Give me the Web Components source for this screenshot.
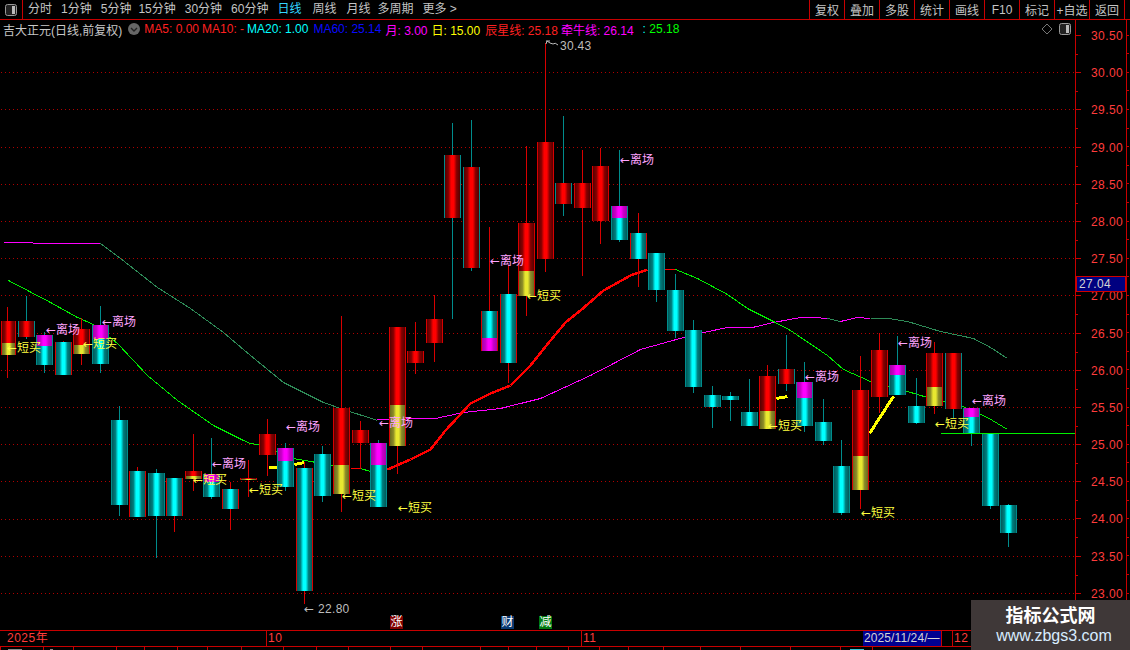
<!DOCTYPE html>
<html>
<head>
<meta charset="utf-8">
<title>K</title>
<style>
html, body { margin: 0; background: #000; overflow: hidden; }
</style>
</head>
<body>
<kline-app>
    <kline-toolbar slot="top">
        <nav-item>分时</nav-item>
        <nav-item>1分钟</nav-item>
        <nav-item>5分钟</nav-item>
        <nav-item style="margin-left:-2px">15分钟</nav-item>
        <nav-item>30分钟</nav-item>
        <nav-item>60分钟</nav-item>
        <nav-item style="color:#33d6ff">日线</nav-item>
        <nav-item style="margin-left:2px">周线</nav-item>
        <nav-item style="margin-left:1px">月线</nav-item>
        <nav-item style="margin-left:-2px">多周期</nav-item>
        <nav-item>更多 &gt;</nav-item>
        <tool-button slot="right">复权</tool-button>
        <tool-button slot="right">叠加</tool-button>
        <tool-button slot="right">多股</tool-button>
        <tool-button slot="right">统计</tool-button>
        <tool-button slot="right">画线</tool-button>
        <tool-button slot="right">F10</tool-button>
        <tool-button slot="right">标记</tool-button>
        <tool-button slot="right">+自选</tool-button>
        <tool-button slot="right">返回</tool-button>
    </kline-toolbar>
    <chart-pane slot="main">
        <legend-bar>
            <legend-item style="color:#c8c8c8">吉大正元(日线,前复权)</legend-item>
            <legend-item style="color:#ff2020;margin-left:1px">MA5: 0.00</legend-item>
            <legend-item style="color:#ff2020">MA10: -</legend-item>
            <legend-item style="color:#00ffff">MA20: 1.00</legend-item>
            <legend-item style="color:#0a0aff;margin-left:2px">MA60: 25.14</legend-item>
            <legend-item style="color:#ff00ff;margin-left:1px">月: 3.00</legend-item>
            <legend-item style="color:#ffff00;margin-left:1px">日: 15.00</legend-item>
            <legend-item style="color:#ff2020;margin-left:2px">辰星线: 25.18</legend-item>
            <legend-item style="color:#ff00ff">牵牛线: 26.14</legend-item>
            <legend-item style="color:#00ff00;margin-left:6px"><span style="color:#00ffff">:</span> 25.18</legend-item>
        </legend-bar>
        <k-chart></k-chart>
    </chart-pane>
    <price-axis slot="axis"></price-axis>
    <time-axis slot="time"></time-axis>
    <tick-strip slot="strip"></tick-strip>
    <brand-badge slot="badge"></brand-badge>
</kline-app>

<script>
const FONT = `"Liberation Sans", "Noto Sans CJK SC", sans-serif`;
const RED_LINE = '#c80000';

// page frame
class klineApp extends HTMLElement {
    constructor() {
        super();
        this.attachShadow({ mode: 'open' });
        this.shadowRoot.innerHTML = `<style>
            :host {
                display: grid;
                position: relative;
                width: 1130px;
                height: 650px;
                overflow: hidden;
                background: #000;
                grid-template-columns: 1075px 55px;
                grid-template-rows: 20px 610px 17px 3px;
                font: 12px ${FONT};
            }
            .wide { grid-column: 1 / 3; min-width: 0; }
        </style>
        <div class="wide"><slot name="top"></slot></div>
        <slot name="main"></slot>
        <slot name="axis"></slot>
        <div class="wide"><slot name="time"></slot></div>
        <div class="wide"><slot name="strip"></slot></div>
        <slot name="badge"></slot>`;
    }
}

class klineToolbar extends HTMLElement {
    constructor() {
        super();
        this.attachShadow({ mode: 'open' });
        this.shadowRoot.innerHTML = `<style>
            :host {
                display: flex;
                height: 20px;
                box-sizing: border-box;
                border-bottom: 1px solid ${RED_LINE};
                align-items: stretch;
            }
            .icon {
                width: 23px;
                box-sizing: border-box;
                border-right: 1px solid ${RED_LINE};
                display: flex;
                align-items: center;
                justify-content: center;
            }
            .left { display: flex; align-items: center; gap: 9px; margin-left: 5px; flex: 1; }
            .right { display: flex; margin-right: 5px; }
        </style>
        <div class="icon"><svg width="12" height="12" viewBox="0 0 12 12">
            <rect x=".5" y=".5" width="11" height="11" rx="2" fill="#222" stroke="#999"/>
            <rect x="7" y="2" width="3" height="8" fill="#bbb"/>
        </svg></div>
        <div class="left"><slot></slot></div>
        <div class="right"><slot name="right"></slot></div>`;
    }
}

class navItem extends HTMLElement {
    constructor() {
        super();
        this.attachShadow({ mode: 'open' });
        this.shadowRoot.innerHTML = `<style>
            :host { display: block; color: #c4c4c4; white-space: nowrap; line-height: 19px; }
        </style><slot></slot>`;
    }
}

class toolButton extends HTMLElement {
    constructor() {
        super();
        this.attachShadow({ mode: 'open' });
        this.shadowRoot.innerHTML = `<style>
            :host {
                display: flex;
                width: 35px;
                box-sizing: border-box;
                align-items: center;
                justify-content: center;
                border-left: 1px solid ${RED_LINE};
                color: #c4c4c4;
                white-space: nowrap;
            }
            :host(:last-child) { border-right: 1px solid ${RED_LINE}; width: 36px; }
        </style><slot></slot>`;
    }
}

class chartPane extends HTMLElement {
    constructor() {
        super();
        this.attachShadow({ mode: 'open' });
        this.shadowRoot.innerHTML = `<style>
            :host { display: flex; flex-direction: column; min-width: 0; }
        </style><slot></slot>`;
    }
}

class legendBar extends HTMLElement {
    constructor() {
        super();
        this.attachShadow({ mode: 'open' });
        this.shadowRoot.innerHTML = `<style>
            :host {
                display: flex;
                align-items: center;
                height: 18px;
                flex: none;
                gap: 3px;
                padding-left: 3px;
                position: relative;
            }
            .marks {
                position: absolute;
                left: 1041px;
                top: 3px;
                display: flex;
                gap: 6px;
                align-items: center;
            }
        </style>
        <slot></slot>
        <div class="marks">
            <svg width="12" height="12" viewBox="0 0 12 12"><path d="M6 1 L11 6 L6 11 L1 6 Z" fill="none" stroke="#777"/></svg>
            <svg width="12" height="12" viewBox="0 0 12 12">
                <rect x=".5" y=".5" width="11" height="11" rx="2" fill="#222" stroke="#999"/>
                <rect x="7" y="2" width="3" height="8" fill="#bbb"/>
            </svg>
        </div>`;
    }

    connectedCallback() {
        // the round dropdown sits right after the title
        const chev = document.createElementNS('http://www.w3.org/2000/svg', 'svg');
        chev.setAttribute('viewBox', '0 0 12 12');
        chev.setAttribute('width', '12');
        chev.setAttribute('height', '12');
        chev.style.cssText = 'flex:none;margin-left:3px';
        chev.innerHTML = '<circle cx="6" cy="6" r="6" fill="#666"/><path d="M3 5 L6 8 L9 5" fill="none" stroke="#222" stroke-width="1.4"/>';
        this.insertBefore(chev, this.children[1]);
    }
}

class legendItem extends HTMLElement {
    constructor() {
        super();
        this.attachShadow({ mode: 'open' });
        this.shadowRoot.innerHTML = `<style>
            :host { display: block; white-space: nowrap; flex: none; }
        </style><slot></slot>`;
    }
}

// high, body top, body bottom, low, kind, split, wick (all in pixels from the top of the window)
const CANDLES = [
    [307,321,355,378,'r',343,'r'], [296,321,337,339,'r',0,'t'], [332,335,365,373,'c',346,'t'],
    [341,342,375,375,'c',0,'r'],   [318,329,354,365,'r',345,'r'], [306,325,364,373,'c',339,'t'],
    [406,420,505,516,'c',0,'t'],   [467,471,517,517,'c',0,'r'], [469,473,516,558,'c',0,'t'],
    [478,478,516,532,'c',0,'r'],   [434,471,479,491,'r',476,'r'], [438,474,497,499,'c',482,'t'],
    [482,489,509,530,'c',0,'r'],   [460,478,480,497,'r',479,'r'], [419,434,455,476,'r',0,'r'],
    [443,448,487,491,'c',461,'t'], [462,468,591,604,'c',0,'r'], [446,454,496,502,'c',0,'t'],
    [316,408,494,512,'r',465,'r'], [421,430,443,469,'r',0,'r'], [440,443,507,507,'c',465,'t'],
    [327,327,446,474,'r',405,'r'], [322,351,363,374,'r',0,'r'], [295,319,343,362,'r',0,'r'],
    [123,155,218,319,'r',0,'t'],   [120,167,268,271,'r',0,'t'], [227,311,351,351,'c',-338,'r'],
    [265,294,363,383,'c',0,'r'],   [146,223,296,316,'r',271,'r'], [43,142,259,272,'r',0,'r'],
    [116,183,204,216,'r',0,'t'],   [150,183,208,276,'r',0,'r'], [148,166,221,244,'r',0,'r'],
    [150,206,240,242,'c',218,'t'], [213,233,259,287,'c',0,'r'], [253,253,290,302,'c',0,'t'],
    [274,290,331,338,'c',0,'t'],   [320,330,387,393,'c',0,'t'], [386,395,407,428,'c',0,'t'],
    [392,396,400,421,'c',0,'t'],   [379,412,426,426,'c',0,'t'], [365,376,429,429,'r',411,'r'],
    [335,369,384,391,'r',0,'t'],   [362,382,426,432,'c',398,'t'], [399,422,441,445,'c',0,'t'],
    [440,466,513,515,'c',0,'t'],   [356,390,490,509,'r',456,'r'], [333,350,397,413,'r',0,'r'],
    [336,365,395,395,'c',375,'t'], [378,406,423,424,'c',0,'t'], [342,353,406,414,'r',387,'r'],
    [353,353,409,418,'r',0,'t'],   [408,408,434,446,'c',417,'t'], [434,434,506,509,'c',0,'t'],
    [504,505,533,547,'c',0,'t'],
];

const LINES = [
    { c: '#ff00ff', w: 1, p: '4,242 60,243 100,243' },
    { c: '#2e8b57', w: 1, p: '100,243 120,258 157,287 190,308 223,332 250,355 283,382 323,402 340,408 377,420' },
    { c: '#ff00ff', w: 1, p: '377,419 435,418 463,412 500,408 540,398 590,375 640,349 683,337 703,332 727,327 752,327 773,322 800,317 813,317 827,318' },
    { c: '#2e8b57', w: 1, p: '827,318 840,321' },
    { c: '#ff00ff', w: 1, p: '840,321 857,317 870,318' },
    { c: '#2e8b57', w: 1, p: '870,318 888,318 907,321 940,331 973,338 990,347 1007,358' },
    { c: '#00ee00', w: 1, p: '8,280 50,302 77,317 93,324 117,343 147,375 177,400 213,425 243,440 250,443 257,444 293,458 350,468' },
    { c: '#ff0000', w: 1, p: '350,468 360,468' },
    { c: '#00ee00', w: 1, p: '360,468 370,471 387,469' },
    { c: '#ff0000', w: 2.5, p: '387,469 410,459 430,449 445,430 470,403 490,393 510,385 530,365 550,340 565,322 580,310 603,290 630,275 647,269' },
    { c: '#ff0000', w: 1, p: '647,269 675,269' },
    { c: '#00ee00', w: 1, p: '675,269 697,278 727,294 747,308 773,321 790,330 827,355 843,369 870,381 907,391 927,397 960,405 987,417 1007,429' },
    { c: '#ffff00', w: 3, p: '268,467 277,467' },
    { c: '#ffff00', w: 3, p: '294,464 304,462' },
    { c: '#ffff00', w: 3, p: '776,398 787,396' },
    { c: '#ffff00', w: 3, p: '869,433 893,396' },
];

const LABELS = [
    [46,329,'l'], [102,321,'l'], [7,347,'b'], [83,343,'b'], [212,463,'l'], [193,479,'b'],
    [286,426,'l'], [249,489,'b'], [342,495,'b'], [398,507,'b'], [379,422,'l'], [620,159,'l'],
    [490,260,'l'], [527,295,'b'], [768,425,'b'], [805,376,'l'], [898,342,'l'], [861,512,'b'],
    [935,423,'b'], [972,400,'l'],
];

const SIGNS = [[390,'涨','#800000'], [501,'财','#0a3a72'], [539,'减','#007a10']];

class kChart extends HTMLElement {
    constructor() {
        super();
        this.attachShadow({ mode: 'open' });
    }

    // bodies have a dark band down each side and a bright core
    grad(id, edge, shade, mid) {
        return `<linearGradient id="${id}">
            <stop offset="0" stop-color="${edge}"/>
            <stop offset=".26" stop-color="${shade}"/>
            <stop offset=".42" stop-color="${mid}"/>
            <stop offset=".58" stop-color="${mid}"/>
            <stop offset=".74" stop-color="${shade}"/>
            <stop offset="1" stop-color="${edge}"/>
        </linearGradient>`;
    }

    candle(d, i) {
        const [high, top, bottom, low, kind, split, wick] = d;
        const x = Math.round(7.3 + 18.537 * i);
        const edge = wick === 't' ? '#008c8c' : '#d80000';
        const left = Math.max(1, x - 8);
        const w = x + 9 - left;
        const base = kind === 'r' ? 'url(#red)' : 'url(#cyan)';
        let out = `<rect x="${x}" y="${high}" width="1" height="${low - high}" fill="${edge}"/>`;
        out += `<rect x="${left}" y="${top}" width="${w}" height="${bottom - top}" fill="${base}"/>`;
        if (split > 0 && kind === 'r') {
            out += `<rect x="${left}" y="${split}" width="${w}" height="${bottom - split}" fill="url(#gold)"/>`;
        }
        if (split > 0 && kind === 'c') {
            out += `<rect x="${left}" y="${top}" width="${w}" height="${split - top}" fill="url(#pink)"/>`;
        }
        if (split < 0) {
            out += `<rect x="${left}" y="${-split}" width="${w}" height="${bottom + split}" fill="url(#pink)"/>`;
        }
        out += `<rect x="${left}" y="${top}" width="1" height="${bottom - top}" fill="${edge}"/>`;
        out += `<rect x="${x + 8}" y="${top}" width="1" height="${bottom - top}" fill="${edge}"/>`;
        return out;
    }

    connectedCallback() {
        let grid = '';
        for (let n = 1; n <= 15; n++) {
            const y = Math.round(35 + n * 37.2);
            grid += `<line x1="1" x2="1075" y1="${y + .5}" y2="${y + .5}" stroke="#b00000" stroke-dasharray="1 3"/>`;
        }
        const lines = LINES.map(l => `<polyline points="${l.p}" fill="none" stroke="${l.c}" stroke-width="${l.w}"/>`).join('');
        const candles = CANDLES.map((d, i) => this.candle(d, i)).join('');
        const labels = LABELS.map(([x, y, k]) => k === 'l'
            ? `<span class="mark leave" style="left:${x}px;top:${y - 45}px">←离场</span>`
            : `<span class="mark buy" style="left:${x}px;top:${y - 45}px">←短买</span>`).join('');
        const signs = SIGNS.map(([x, t, c]) => `<span class="sign" style="left:${x}px;background:${c}">${t}</span>`).join('');

        this.shadowRoot.innerHTML = `<style>
            :host { display: block; position: relative; flex: 1; min-height: 0; }
            svg { position: absolute; left: 0; top: 0; display: block; }
            .mark {
                position: absolute;
                line-height: 16px;
                white-space: nowrap;
                font-family: "DejaVu Sans", "Noto Sans CJK SC", sans-serif;
            }
            .leave { color: #ffa4ff; }
            .buy { color: #ffff40; }
            .low { color: #bdbdbd; letter-spacing: .3px; font-family: ${FONT}; }
            .low i { font: 12px/16px "DejaVu Sans", sans-serif; margin-right: 4px; letter-spacing: 0; }
            .sign {
                position: absolute;
                top: 578px;
                width: 13px;
                height: 13px;
                line-height: 13px;
                text-align: center;
                color: #fff;
            }
        </style>
        <svg width="1075" height="592" viewBox="0 38 1075 592">
            <defs>
                ${this.grad('red', '#480000', '#860000', '#ff0000')}
                ${this.grad('cyan', '#005050', '#007c7c', '#00ffff')}
                ${this.grad('gold', '#60601a', '#8c8c28', '#e8e830')}
                ${this.grad('pink', '#a000a0', '#c800c8', '#ff00ff')}
            </defs>
            <g shape-rendering="crispEdges">${grid}</g>
            <g shape-rendering="crispEdges" transform="translate(.5 .5)">${lines}</g>
            <g shape-rendering="crispEdges">${candles}</g>
            <line x1="941" x2="1075" y1="433.5" y2="433.5" stroke="#00f000" shape-rendering="crispEdges"/>
            <path d="M553 44 L550 43 L547 41 L546 44 M546 41 L550 41" fill="none" stroke="#bdbdbd"/>
            <path d="M553 44 Q555 42 558 45" fill="none" stroke="#bdbdbd"/>
        </svg>
        ${labels}
        <span class="mark low" style="left:560px;top:0">30.43</span>
        <span class="mark low" style="left:304px;top:563px"><i>←</i>22.80</span>
        ${signs}`;
    }
}

class priceAxis extends HTMLElement {
    constructor() {
        super();
        this.attachShadow({ mode: 'open' });
    }

    connectedCallback() {
        let rows = '';
        for (let n = 0; n <= 15; n++) {
            rows += `<div class="row">${(30.5 - n * .5).toFixed(2)}</div>`;
        }
        this.shadowRoot.innerHTML = `<style>
            :host {
                display: flex;
                flex-direction: column;
                gap: 21.2px;
                position: relative;
                box-sizing: border-box;
                border-left: 1px solid ${RED_LINE};
                padding: 8px 0 0 15px;
                color: #ff3c3c;
                letter-spacing: .4px;
                overflow: hidden;
            }
            :host::after {
                content: '';
                position: absolute;
                left: 50px;
                top: -2.6px;
                bottom: 0;
                width: 3px;
                background:
                    linear-gradient(${RED_LINE}, ${RED_LINE}) 0 0 / 1px 100% no-repeat,
                    repeating-linear-gradient(transparent 0, transparent 17.6px, ${RED_LINE} 17.6px, ${RED_LINE} 18.6px);
            }
            .row { position: relative; height: 16px; line-height: 16px; flex: none; }
            .row::before, .row::after {
                content: '';
                position: absolute;
                height: 1px;
                background: ${RED_LINE};
            }
            .row::before { left: -15px; top: 7px; width: 5px; }
            .row::after { left: -15px; top: 26px; width: 2px; }
            .now {
                position: absolute;
                left: 0;
                top: 256px;
                width: 50px;
                height: 16px;
                box-sizing: border-box;
                border: 1px solid #d00000;
                background: #000080;
                color: #d4d4d4;
                line-height: 14px;
                padding-left: 2px;
                letter-spacing: .4px;
                z-index: 1;
            }
        </style>${rows}<div class="now">27.04</div>`;
    }
}

class timeAxis extends HTMLElement {
    constructor() {
        super();
        this.attachShadow({ mode: 'open' });
        this.shadowRoot.innerHTML = `<style>
            :host {
                display: flex;
                height: 17px;
                box-sizing: border-box;
                border-top: 1px solid ${RED_LINE};
                border-bottom: 1px solid ${RED_LINE};
                color: #ff3c3c;
                line-height: 15px;
                letter-spacing: .5px;
            }
            .seg { box-sizing: border-box; flex: none; padding-left: 1px; border-left: 1px solid ${RED_LINE}; }
            .y { width: 266px; border-left: 0; padding-left: 7px; }
            .a { width: 315px; }
            .b { width: 282px; }
            .date {
                flex: none;
                width: 79px;
                box-sizing: border-box;
                background: #000090;
                color: #d4d4d4;
                padding-left: 1px;
                border-right: 1px solid ${RED_LINE};
                white-space: nowrap;
                overflow: hidden;
                letter-spacing: .1px;
            }
            .gap { width: 10px; flex: none; }
        </style>
        <div class="seg y">2025年</div>
        <div class="seg a">10</div>
        <div class="seg b">11</div>
        <div class="date">2025/11/24/—</div>
        <div class="gap"></div>
        <div class="seg">12</div>`;
    }
}

class tickStrip extends HTMLElement {
    constructor() {
        super();
        this.attachShadow({ mode: 'open' });
    }

    connectedCallback() {
        const xs = [0,43,73,116,144,177,207,241,283,316,348,390,422,480,508,536,568,599,628,663,700,740,790,840,872];
        this.shadowRoot.innerHTML = `<style>
            :host { display: block; height: 3px; }
            svg { display: block; }
        </style>
        <svg width="1130" height="3" shape-rendering="crispEdges">
            ${xs.map(x => `<rect x="${x}" width="1" height="3" fill="${RED_LINE}"/>`).join('')}
            <rect x="8" y="2" width="14" height="1" fill="#8a8a8a"/>
            <rect x="50" y="2" width="3" height="1" fill="#8a8a8a"/>
            <rect x="850" y="2" width="14" height="1" fill="#39c8d8"/>
        </svg>`;
    }
}

class brandBadge extends HTMLElement {
    constructor() {
        super();
        this.attachShadow({ mode: 'open' });
        this.shadowRoot.innerHTML = `<style>
            :host {
                position: absolute;
                right: 0;
                bottom: 0;
                width: 159px;
                height: 50px;
                box-sizing: border-box;
                padding-bottom: 2px;
                background: #3f3838;
                display: flex;
                flex-direction: column;
                align-items: center;
                justify-content: center;
                z-index: 2;
            }
            .cn { font: bold 18px/24px "Noto Sans CJK SC", sans-serif; color: #fff; }
            .url { font: 16px/20px "Liberation Sans", sans-serif; color: #d8ecff; margin-left: 7px; }
        </style>
        <div class="cn">指标公式网</div>
        <div class="url">www.zbgs3.com</div>`;
    }
}

customElements.define('kline-app', klineApp);
customElements.define('kline-toolbar', klineToolbar);
customElements.define('nav-item', navItem);
customElements.define('tool-button', toolButton);
customElements.define('chart-pane', chartPane);
customElements.define('legend-bar', legendBar);
customElements.define('legend-item', legendItem);
customElements.define('k-chart', kChart);
customElements.define('price-axis', priceAxis);
customElements.define('time-axis', timeAxis);
customElements.define('tick-strip', tickStrip);
customElements.define('brand-badge', brandBadge);
</script>
</body>
</html>
